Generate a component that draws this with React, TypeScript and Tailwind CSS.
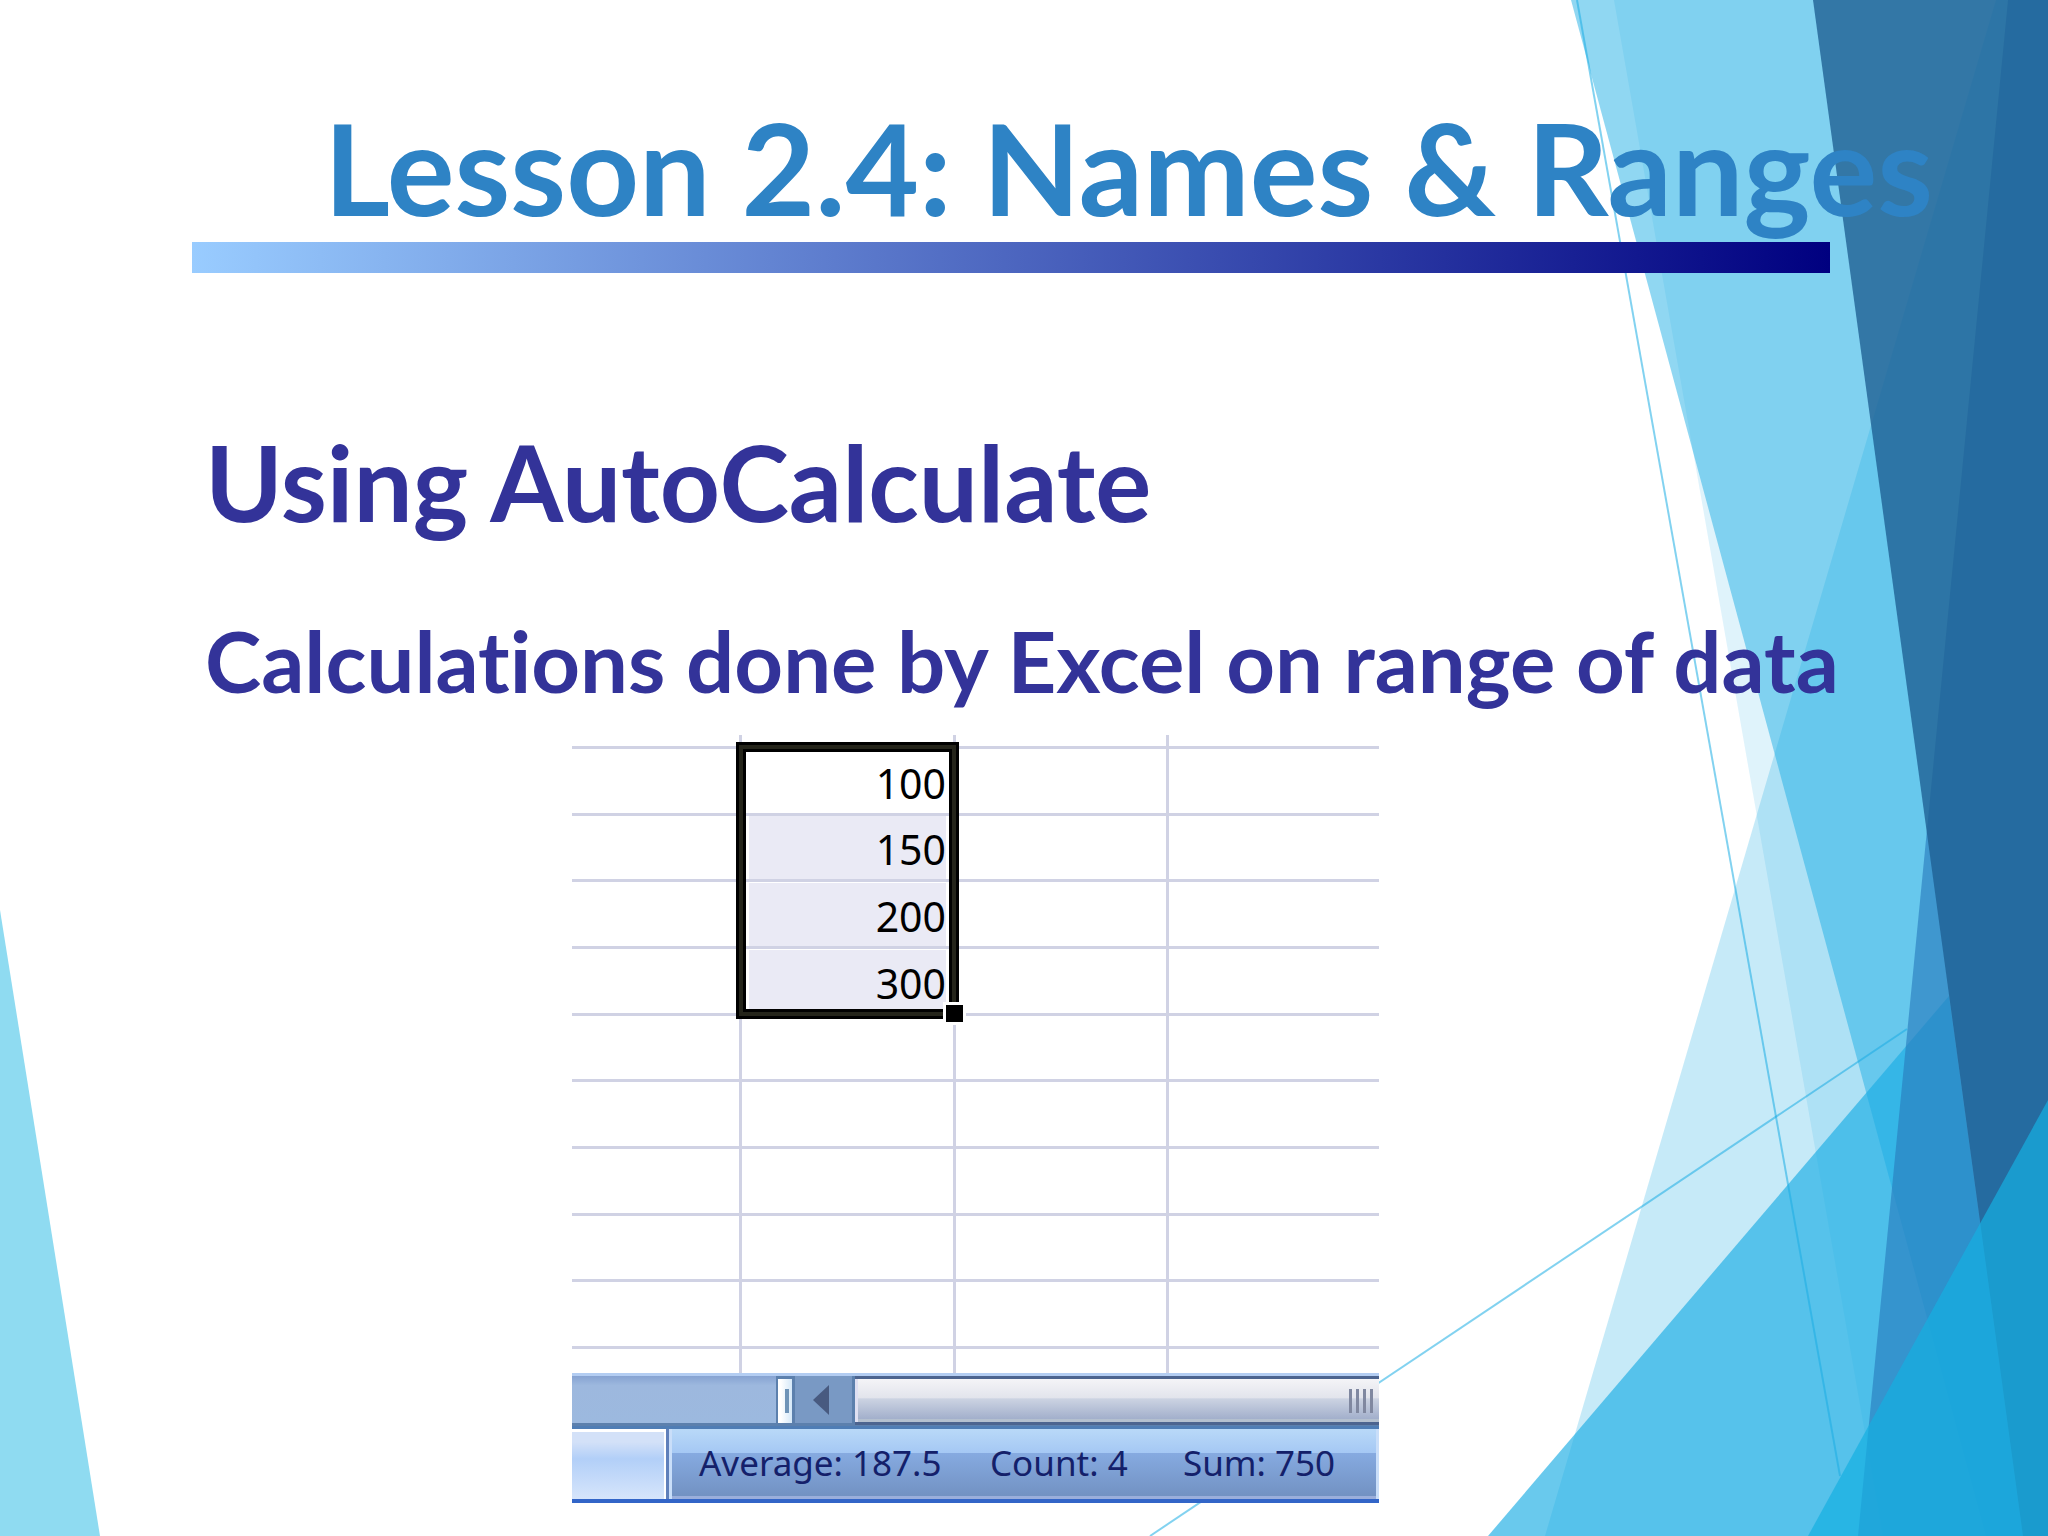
import clsx from 'clsx'

interface Row {
    value?: number
    shaded?: boolean
    height: string
}

const rows: Row[] = [
    { value: 100, height: 'h-[67px]' },
    { value: 150, height: 'h-[66px]', shaded: true },
    { value: 200, height: 'h-[67px]', shaded: true },
    { value: 300, height: 'h-[67px]', shaded: true },
    { height: 'h-[66px]' },
    { height: 'h-[67px]' },
    { height: 'h-[67px]' },
    { height: 'h-[66px]' },
    { height: 'h-[67px]' }
]

const line = 'border-[#d0d2e4]'

function Backdrop() {
    return (
        <svg
            className="absolute inset-0 w-full h-full"
            viewBox="0 0 2048 1536"
            preserveAspectRatio="none"
            aria-hidden="true"
        >
            <g stroke="#1cade4" strokeOpacity="0.55" strokeWidth="2">
                <path d="M1577 0 1840 1476" />
                <path d="M1150 1536 1907 1029" />
            </g>
            <path
                d="M1996 0H2048V1536H1545Z"
                fill="#1cade4"
                fillOpacity="0.25"
            />
            <path
                d="M1614 0H2048V1536H1883Z"
                fill="#1cade4"
                fillOpacity="0.14"
            />
            <path
                d="M1949 996 2023 1536H1488Z"
                fill="#1cade4"
                fillOpacity="0.66"
            />
            <path
                d="M1571 0H2048V1536H1986Z"
                fill="#1cade4"
                fillOpacity="0.49"
            />
            <path
                d="M2008 0H2048V1536H1858Z"
                fill="#287bbe"
                fillOpacity="0.64"
            />
            <path
                d="M1813 0H2048V1536H2023Z"
                fill="#1f6094"
                fillOpacity="0.8"
            />
            <path d="M2048 1100V1536H1808Z" fill="#16afe1" fillOpacity="0.7" />
            <path d="M0 910 100 1536H0Z" fill="#8fdbf1" />
        </svg>
    )
}

function Selection() {
    return (
        <>
            <div className="absolute left-[164px] top-[7px] w-[223px] h-[277px] border-[3px] border-black">
                <div className="w-full h-full border-4 border-[#24241a]">
                    <div className="w-full h-full border-[3px] border-black"></div>
                </div>
            </div>
            <div className="absolute left-[371px] top-[267px] w-[23px] h-[23px] border-[3px] border-white bg-black"></div>
        </>
    )
}

function Sheet() {
    return (
        <div className="relative bg-white">
            <table className="w-full table-fixed border-separate border-spacing-0">
                <colgroup>
                    <col className="w-[170px]" />
                    <col className="w-[214px]" />
                    <col className="w-[213px]" />
                    <col />
                </colgroup>
                <tbody>
                    <tr className="h-[14px]">
                        <td className={clsx('p-0 border-b-[3px] border-r-[3px]', line)}></td>
                        <td className={clsx('p-0 border-b-[3px] border-r-[3px]', line)}></td>
                        <td className={clsx('p-0 border-b-[3px] border-r-[3px]', line)}></td>
                        <td className={clsx('p-0 border-b-[3px]', line)}></td>
                    </tr>
                    {rows.map((row, i) => (
                        <tr key={i} className={row.height}>
                            <td className={clsx('p-0 border-b-[3px] border-r-[3px]', line)}></td>
                            <td className={clsx('p-0 border-b-[3px] border-r-[3px]', line)}>
                                {row.value && (
                                    <div
                                        className={clsx(
                                            'mx-[7px] h-[63px] leading-[66px] text-[41px] text-right text-black',
                                            row.shaded && 'bg-[#eaeaf5]'
                                        )}
                                    >
                                        {row.value}
                                    </div>
                                )}
                            </td>
                            <td className={clsx('p-0 border-b-[3px] border-r-[3px]', line)}></td>
                            <td className={clsx('p-0 border-b-[3px]', line)}></td>
                        </tr>
                    ))}
                    <tr className="h-[24px]">
                        <td className={clsx('p-0 border-r-[3px]', line)}></td>
                        <td className={clsx('p-0 border-r-[3px]', line)}></td>
                        <td className={clsx('p-0 border-r-[3px]', line)}></td>
                        <td className="p-0"></td>
                    </tr>
                </tbody>
            </table>
            <Selection />
        </div>
    )
}

function ScrollRow() {
    return (
        <div className="flex h-14 border-t-[3px] border-t-[#b3cdf2] border-b-[3px] border-b-[#4f7db5] bg-[#5c80ad]">
            <div className="w-[204px] mb-[3px] bg-linear-to-b/srgb from-[#86a3d2] via-[#9db8de] via-20% to-[#9cb9df]"></div>
            <div className="flex items-center justify-end w-[14px] ml-[2px] mr-[3px] my-[3px] pr-[3px] bg-linear-to-r/srgb from-white from-20% to-[#d5e8f8]">
                <div className="w-1 h-6 bg-[#6f94b8]"></div>
            </div>
            <div className="flex items-center w-[57px] mb-[3px] pl-[18px] bg-[#7999c4]">
                <svg width="16" height="30" viewBox="0 0 16 30">
                    <path d="M0 15 16 0V30Z" fill="#485a80" />
                </svg>
            </div>
            <div className="flex grow items-center justify-end gap-1 ml-[3px] mt-[3px] mb-[4px] pr-[6px] border-l-[3px] border-[#dfe0f2] bg-[linear-gradient(#f4f4f7_0%,#e2e4ec_44%,#ccd3e2_46%,#a3b0cc_92%,#b4c0cf_94%)] shadow-[0_-3px_0_#4c648f,0_3px_0_#4c648f]">
                {[0, 1, 2, 3].map(i => (
                    <div key={i} className="w-[3px] h-6 bg-[#8088a0]"></div>
                ))}
            </div>
        </div>
    )
}

function StatusBar() {
    return (
        <div className="flex h-[74px] border-b-4 border-[#3265c8] text-[35px] leading-[67px] whitespace-nowrap text-[#14206a]">
            <div className="w-[94px] border-t-[3px] border-r-2 border-white bg-linear-to-b/srgb from-[#d3e1f8] from-15% via-[#b2cff8] via-40% to-[#d6e5fb]"></div>
            <div className="w-[3px] bg-[#5f80bb]"></div>
            <div className="flex grow border-x-[3px] border-[#c9def9] pl-[27px] bg-[linear-gradient(#b9d9f8_0%,#a5c8f4_34%,#86aae0_35%,#7292c3_95%,#9aaedb_96%)]">
                <span className="w-[291px]">Average: 187.5</span>
                <span className="w-[193px]">Count: 4</span>
                <span>Sum: 750</span>
            </div>
        </div>
    )
}

function App() {
    return (
        <div className="relative min-h-screen overflow-hidden bg-white font-['Lato',sans-serif] font-bold [font-variant-ligatures:none]">
            <Backdrop />
            <main className="relative pt-[95px] pl-48">
                <h1 className="pb-[2px] pl-[132px] text-[127px] leading-[145px] whitespace-nowrap text-[#2e83c5]">
                    Lesson 2.4: Names &amp; Ranges
                </h1>
                <div className="h-[31px] mr-[218px] bg-linear-to-r/srgb from-[#99ccff] to-[#000080]"></div>
                <h2 className="pt-[148px] pl-[13px] text-[105px] leading-[120px] whitespace-nowrap text-[#333399]">
                    Using AutoCalculate
                </h2>
                <p className="pt-[71px] pl-[13px] text-[85px] leading-[96px] whitespace-nowrap text-[#333399]">
                    Calculations done by Excel on range of data
                </p>
                <section className="w-[807px] ml-[380px] mt-[27px] font-['Noto_Sans',sans-serif] font-normal">
                    <Sheet />
                    <ScrollRow />
                    <StatusBar />
                </section>
            </main>
        </div>
    )
}

export default App
